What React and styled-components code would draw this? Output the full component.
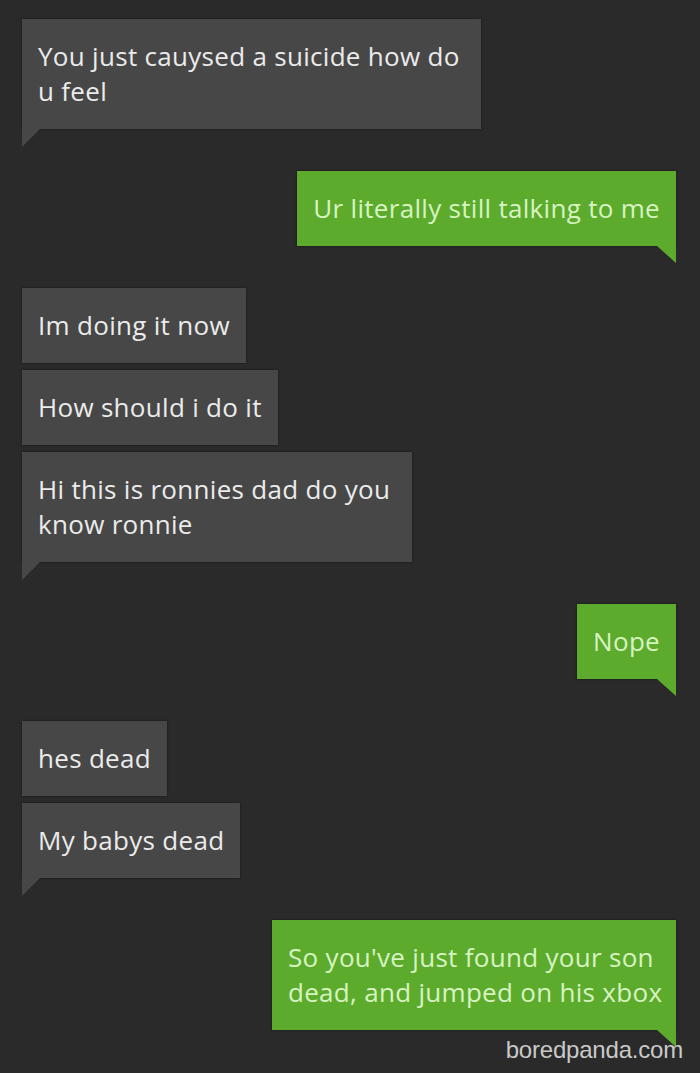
import React from "react";
import styled, { createGlobalStyle, css } from "styled-components";

const Global = createGlobalStyle`
  html, body {
    margin: 0;
    padding: 0;
    background: #2a2a2a;
  }
  body {
    font-family: "Open Sans", "Noto Sans", sans-serif;
  }
`;

const Page = styled.div`
  position: relative;
  width: 700px;
  height: 1073px;
  box-sizing: border-box;
  padding: 19px 24px 0 22px;
  background: #2a2a2a;
  display: flex;
  flex-direction: column;
  gap: 42px;
  overflow: hidden;
`;

const Group = styled.div`
  display: flex;
  flex-direction: column;
  gap: 7px;
  align-items: ${(p) => (p.$mine ? "flex-end" : "flex-start")};
`;

const Bubble = styled.div`
  position: relative;
  box-sizing: border-box;
  width: ${(p) => (p.$w ? `${p.$w}px` : "auto")};
  padding: 20px 16px 20px 16px;
  font-size: 26px;
  line-height: 35px;
  letter-spacing: 0.3px;
  white-space: nowrap;
  background: ${(p) => (p.$mine ? "#5cab2d" : "#474747")};
  color: ${(p) => (p.$mine ? "#d8f3c2" : "#ebebeb")};
  box-shadow: 0 0 2px rgba(0, 0, 0, 0.55);

  ${(p) =>
    p.$tail &&
    !p.$mine &&
    css`
      &::after {
        content: "";
        position: absolute;
        left: 0;
        top: 100%;
        border-top: 18px solid #474747;
        border-right: 18px solid transparent;
      }
    `}
  ${(p) =>
    p.$tail &&
    p.$mine &&
    css`
      &::after {
        content: "";
        position: absolute;
        right: 0;
        top: 100%;
        border-top: 17px solid #5cab2d;
        border-left: 19px solid transparent;
      }
    `}
`;

const Line = styled.div``;

const Watermark = styled.div`
  position: absolute;
  right: 17px;
  bottom: 9px;
  font-family: "Liberation Sans", Arial, sans-serif;
  font-size: 24px;
  color: #c9c9c9;
  letter-spacing: -0.2px;
`;

const conversation = [
  { mine: false, items: [{ lines: ["You just cauysed a suicide how do", "u feel"], w: 459 }] },
  { mine: true, items: [{ lines: ["Ur literally still talking to me"] }] },
  {
    mine: false,
    items: [
      { lines: ["Im doing it now"] },
      { lines: ["How should i do it"] },
      { lines: ["Hi this is ronnies dad do you", "know ronnie"], w: 390 },
    ],
  },
  { mine: true, items: [{ lines: ["Nope"] }] },
  { mine: false, items: [{ lines: ["hes dead"] }, { lines: ["My babys dead"] }] },
  {
    mine: true,
    items: [{ lines: ["So you've just found your son", "dead, and jumped on his xbox"], w: 404 }],
  },
];

export default function App() {
  return (
    <>
      <Global />
      <Page>
        {conversation.map((g, gi) => (
          <Group key={gi} $mine={g.mine}>
            {g.items.map((m, i) => (
              <Bubble
                key={i}
                $mine={g.mine}
                $w={m.w}
                $tail={i === g.items.length - 1}
              >
                {m.lines.map((l, li) => (
                  <Line key={li}>{l}</Line>
                ))}
              </Bubble>
            ))}
          </Group>
        ))}
        <Watermark>boredpanda.com</Watermark>
      </Page>
    </>
  );
}
